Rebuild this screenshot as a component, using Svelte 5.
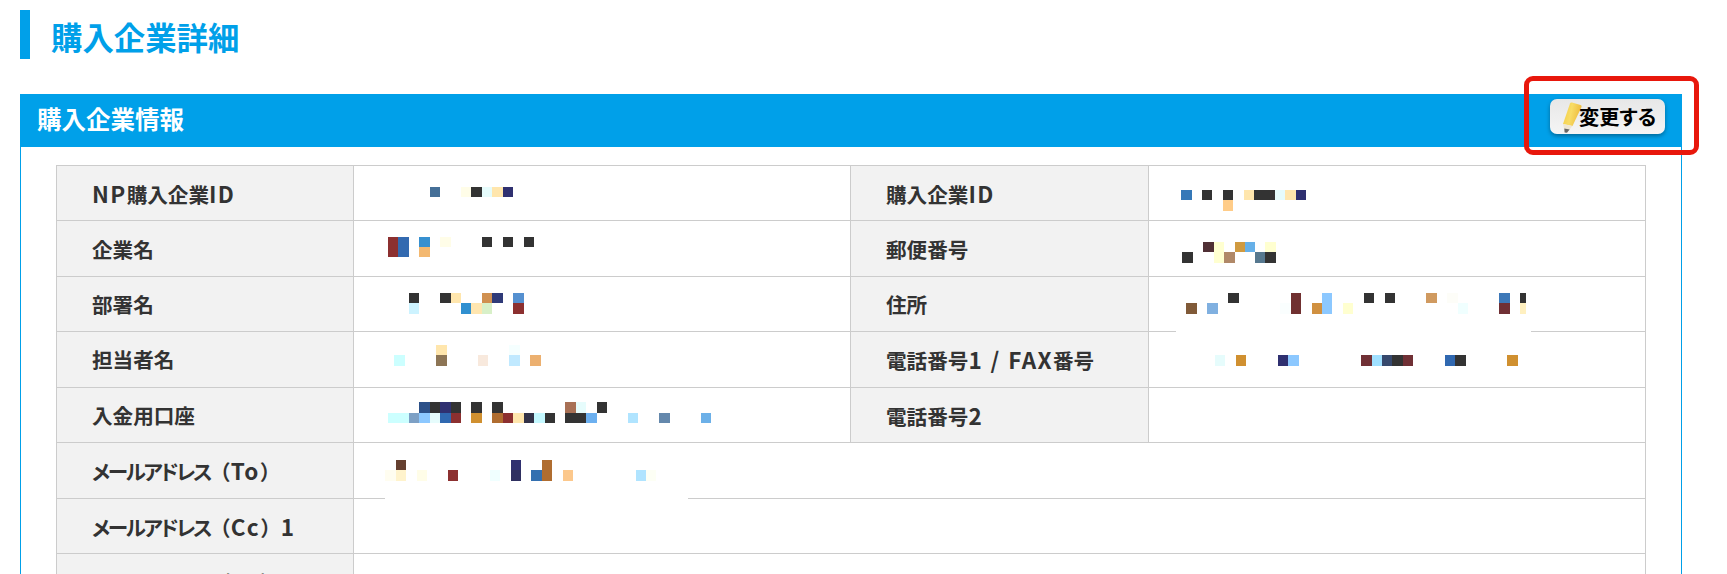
<script>
  // table rows: label / redacted cell pairs
  const rows = [
    { th: "NP購入企業ID", th2: "購入企業ID" },
    { th: "企業名", th2: "郵便番号" },
    { th: "部署名", th2: "住所" },
    { th: "担当者名", th2: "電話番号1 / FAX番号" },
    { th: "入金用口座", th2: "電話番号2" },
    { th: "メールアドレス（To）" },
    { th: "メールアドレス（Cc）1" },
    { th: "メールアドレス（Cc）2" },
  ];

  // latin and katakana sit at other widths than the kanji in these labels
  function runs(label) {
    return label.match(/[A-Za-z0-9 /]+|[ァ-ヶー]+|[^A-Za-z0-9 /ァ-ヶー]+/g).map((text) => ({
      text,
      cls: /^[A-Za-z0-9 /]/.test(text) ? "lat" : /^[ァ-ヶー]/.test(text) ? "kana" : "",
    }));
  }

  const ink = "#333333";
  const navy = "#2f3070";
  const red = "#8c3030";
  const wine = "#703035";
  const sand = "#ffe6ad";
  const ice = "#e6fcfc";
  const sky = "#8cc8ff";
  const cream = "#ffffd0";
  const ochre = "#d09030";

  // mosaic of the blurred values, [x0, x1, y0, y1, colour] in page pixels
  const mosaic = [
    [430, 440, 187, 197, "#456f97"], [461, 471, 187, 197, "#fffde8"], [471, 482, 187, 197, ink], [482, 492, 187, 197, ice], [492, 503, 187, 197, sand], [503, 513, 187, 197, navy],
    [388, 398, 237, 257, red], [398, 409, 237, 257, "#336ab0"], [419, 430, 237, 247, "#3790d0"], [419, 430, 247, 257, "#f3b870"], [440, 451, 237, 247, "#fffde8"], [482, 492, 237, 247, ink], [503, 513, 237, 247, ink], [524, 534, 237, 247, ink],
    [409, 419, 293, 303, ink], [440, 451, 293, 303, ink], [451, 461, 293, 303, sand], [482, 492, 293, 303, "#d09050"], [492, 503, 293, 303, "#2f3a78"], [513, 524, 293, 303, "#5590d0"],
    [409, 419, 303, 314, "#cdf3ff"], [461, 471, 303, 314, "#3090d0"], [471, 482, 303, 314, "#ffe6b0"], [482, 492, 303, 314, "#d8f0c8"], [513, 524, 303, 314, red],
    [436, 447, 345, 355, sand], [509, 520, 345, 355, "#f5ffff"],
    [394, 405, 355, 366, "#ccffff"], [436, 447, 355, 366, "#8d7555"], [478, 488, 355, 366, "#f8e9dd"], [509, 520, 355, 366, "#c0e9ff"], [530, 541, 355, 366, "#ecb070"],
    [419, 430, 402, 413, "#2c5088"], [430, 440, 402, 413, ink], [440, 451, 402, 413, navy], [451, 461, 402, 413, ink], [471, 482, 402, 413, ink], [492, 503, 402, 413, ink], [565, 576, 402, 413, "#a87055"], [576, 586, 402, 413, ice], [597, 607, 402, 413, ink],
    [388, 409, 413, 423, "#ccffff"], [409, 419, 413, 423, "#7da0c5"], [419, 430, 413, 423, sky], [430, 440, 413, 423, ice], [440, 451, 413, 423, "#3068b0"], [451, 461, 413, 423, red], [471, 482, 413, 423, ochre], [492, 503, 413, 423, "#b06d30"], [503, 513, 413, 423, red], [513, 524, 413, 423, sand], [524, 534, 413, 423, "#333348"], [534, 545, 413, 423, "#c4f8ff"], [545, 555, 413, 423, ink], [565, 586, 413, 423, ink], [586, 597, 413, 423, "#6cb0f0"], [628, 638, 413, 423, "#b0e4ff"], [659, 670, 413, 423, "#6488ac"], [701, 711, 413, 423, "#6cb0e8"],
    [396, 406, 460, 470, "#654030"], [511, 521, 460, 470, navy], [542, 552, 460, 470, "#b06d30"],
    [385, 396, 470, 481, "#fffdf0"], [396, 406, 470, 481, "#fff3cc"], [417, 427, 470, 481, "#fffde8"], [448, 458, 470, 481, red], [490, 500, 470, 481, "#f0ffff"], [511, 521, 470, 481, "#2f3060"], [531, 542, 470, 481, "#3470b0"], [542, 552, 470, 481, "#b06d30"], [563, 573, 470, 481, "#fcc88c"], [636, 646, 470, 481, "#b0e4ff"], [646, 656, 470, 481, "#fdfff5"],

    [1181, 1192, 190, 200, "#3578b8"], [1202, 1212, 190, 200, ink], [1223, 1233, 190, 200, ink], [1244, 1254, 190, 200, sand], [1254, 1275, 190, 200, ink], [1275, 1285, 190, 200, ice], [1285, 1296, 190, 200, sand], [1296, 1306, 190, 200, navy], [1223, 1233, 200, 211, "#ffcc88"],
    [1203, 1214, 242, 252, "#503035"], [1214, 1224, 242, 263, cream], [1235, 1245, 242, 252, "#d09a40"], [1245, 1255, 242, 252, "#66b0e8"], [1265, 1276, 242, 252, cream],
    [1182, 1193, 252, 263, ink], [1224, 1235, 252, 263, "#b08868"], [1255, 1265, 252, 263, "#56788f"], [1265, 1276, 252, 263, ink],
    [1228, 1239, 293, 303, ink], [1291, 1301, 293, 314, "#703030"], [1322, 1332, 293, 314, sky], [1364, 1374, 293, 303, ink], [1385, 1395, 293, 303, ink], [1426, 1437, 293, 303, "#d09a60"], [1447, 1458, 293, 303, "#fdfdf8"], [1499, 1510, 293, 303, "#3d78b8"], [1520, 1526, 293, 303, ink],
    [1186, 1197, 303, 314, "#805a38"], [1207, 1218, 303, 314, "#80b0e0"], [1280, 1291, 303, 314, "#fafefe"], [1312, 1322, 303, 314, "#d09040"], [1343, 1353, 303, 314, cream], [1458, 1468, 303, 314, "#f0ffff"], [1499, 1510, 303, 314, wine], [1520, 1526, 303, 314, "#fff0c0"],
    [1215, 1225, 355, 366, ice], [1236, 1246, 355, 366, ochre], [1278, 1288, 355, 366, navy], [1288, 1299, 355, 366, sky], [1361, 1372, 355, 366, wine], [1372, 1382, 355, 366, "#a0e0ff"], [1382, 1392, 355, 366, "#36486c"], [1392, 1403, 355, 366, ink], [1403, 1413, 355, 366, wine], [1445, 1455, 355, 366, "#3068b0"], [1455, 1466, 355, 366, ink], [1507, 1518, 355, 366, ochre],

    // white patches left by the blur over the row lines
    [1176, 1531, 329, 333, "#ffffff"],
    [385, 688, 496, 500, "#ffffff"],
  ];
</script>

{#snippet label(text)}
  {#each runs(text) as run}<span class={run.cls}>{run.text}</span>{/each}
{/snippet}

<div class="page">
  <h1 class="page-title">購入企業詳細</h1>

  <section class="panel">
    <header class="panel-head">
      <h2>購入企業情報</h2>
      <button class="edit-btn" type="button">
        <svg class="pencil" viewBox="0 0 22 34" width="22" height="34" aria-hidden="true">
          <defs>
            <linearGradient id="pencil-body" x1="0" y1="0" x2="1" y2="0.25">
              <stop offset="0" stop-color="#f3cd3f" />
              <stop offset="0.5" stop-color="#f8dc66" />
              <stop offset="1" stop-color="#eebb3c" />
            </linearGradient>
          </defs>
          <path d="M1 24 L8 3.5 Q8.5 2.2 10 2.6 L18.5 5 Q20 5.5 19.5 7 L10.5 26 Z" fill="url(#pencil-body)" />
          <path d="M1 24 L10.5 26 L5 32.5 L2.8 32 Z" fill="#efe6d2" />
          <path d="M2.3 28.5 L7.6 29.5 L5 32.8 L2.6 32.4 Z" fill="#666" />
        </svg>
        <span>変更する</span>
      </button>
      <div class="callout"></div>
    </header>

    <table class="info">
      <colgroup>
        <col style="width:296.5px" />
        <col style="width:497.5px" />
        <col style="width:297.5px" />
        <col />
      </colgroup>
      <tbody>
        {#each rows as row}
          <tr>
            <th>{@render label(row.th)}</th>
            {#if row.th2}
              <td></td>
              <th>{@render label(row.th2)}</th>
              <td></td>
            {:else}
              <td colspan="3"></td>
            {/if}
          </tr>
        {/each}
      </tbody>
    </table>
  </section>

  <svg class="mosaic" width="1727" height="574" aria-hidden="true">
    {#each mosaic as [x0, x1, y0, y1, fill]}
      <rect x={x0} y={y0} width={x1 - x0} height={y1 - y0} {fill} />
    {/each}
  </svg>
</div>

<style>
  :global(body) {
    margin: 0;
    background: #fff;
    overflow: hidden;
  }

  .page {
    position: relative;
    height: 574px;
    overflow: hidden;
    padding: 10px 45px 0 20px;
    box-sizing: border-box;
    font-family: "Noto Sans CJK JP", "Noto Sans", sans-serif;
    color: #333;
  }

  .page-title {
    margin: 0 0 35px;
    height: 49px;
    border-left: 10px solid #00a0e9;
    padding-left: 21px;
    font-size: 31.4px;
    font-weight: 700;
    line-height: 53px;
    color: #00a0e9;
  }

  .panel {
    border: 1px solid #00a0e9;
    border-top: 0;
    border-bottom: 0;
    padding: 0 0 40px;
    height: 600px;
  }

  .panel-head {
    position: relative;
    display: flex;
    justify-content: space-between;
    align-items: flex-start;
    height: 53px;
    margin: 0 -1px;
    padding: 5px 17px 0 17px;
    box-sizing: border-box;
    background: #00a0e9;
  }

  .panel-head h2 {
    margin: 0;
    font-size: 24.5px;
    font-weight: 700;
    line-height: 40px;
    color: #fff;
  }

  .edit-btn {
    display: flex;
    align-items: center;
    width: 115px;
    height: 35px;
    padding: 0 0 0 12px;
    border: 0;
    border-radius: 7px;
    background: linear-gradient(#e7e7e7, #f5f5f5);
    box-shadow: 0 2px 4px rgba(0, 0, 0, 0.35);
    font-family: inherit;
    font-size: 20.2px;
    font-weight: 700;
    font-feature-settings: "palt";
    color: #000;
  }

  .pencil {
    flex: none;
    margin-right: -5px;
  }

  /* red annotation drawn round the button */
  .callout {
    position: absolute;
    left: 1504px;
    top: -18px;
    width: 175px;
    height: 79px;
    box-sizing: border-box;
    border: 5px solid #e8170c;
    border-radius: 9px;
  }

  .info {
    width: 1590px;
    margin: 18px 35px 0;
    border-collapse: collapse;
    table-layout: fixed;
  }

  .info th,
  .info td {
    height: 55.43px;
    padding: 0;
    box-sizing: border-box;
    border: 1px solid #ccc;
    background: #fff;
  }

  .info th {
    padding-left: 35px;
    background: #f2f2f2;
    font-size: 20.6px;
    font-weight: 700;
    text-align: left;
    color: #333;
    white-space: nowrap;
  }

  .lat {
    font-size: 22.5px;
    letter-spacing: 1.4px;
    word-spacing: 1px;
  }

  .kana {
    font-feature-settings: "palt";
    letter-spacing: -2.3px;
  }

  .mosaic {
    position: absolute;
    left: 0;
    top: 0;
  }
</style>
